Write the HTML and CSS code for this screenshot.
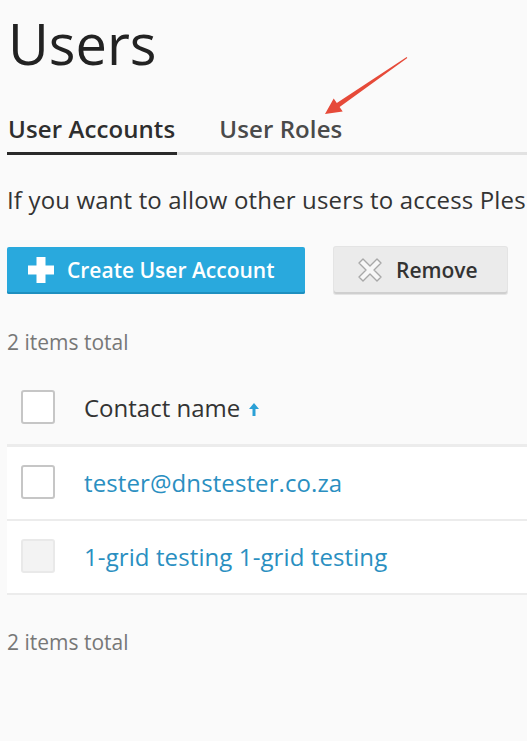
FILE: index.html
```html
<!DOCTYPE html>
<html lang="en">
<head>
<meta charset="utf-8">
<title>Users</title>
<link rel="stylesheet" href="styles.css">
</head>
<body>
<div class="page">
  <h1 class="title">Users</h1>

  <div class="tabs">
    <a class="tab tab-active">User Accounts</a>
    <a class="tab">User Roles</a>
  </div>

  <p class="hint">If you want to allow other users to access Plesk, create user accounts for them.</p>

  <div class="toolbar">
    <button class="btn btn-primary">
      <svg class="btn-icon" width="26" height="26" viewBox="0 0 26 26"><path d="M8.5 0h9v8.5H26v9h-8.5V26h-9v-8.5H0v-9h8.5z" fill="#fff"/></svg>
      <span>Create User Account</span>
    </button>
    <button class="btn btn-secondary">
      <svg class="btn-icon" width="26" height="26" viewBox="0 0 26 26"><polygon points="2,6 6,2 13,9 20,2 24,6 17,13 24,20 20,24 13,17 6,24 2,20 9,13" fill="#f7f7f7" stroke="#a8a8a8" stroke-width="1.4" stroke-linejoin="round"/></svg>
      <span>Remove</span>
    </button>
  </div>

  <div class="total">2 items total</div>

  <div class="table">
    <div class="row row-head">
      <span class="check"></span>
      <span class="head-label">Contact name
        <svg class="sort" width="12" height="15" viewBox="0 0 12 15"><path d="M6 1L1 7H4.5V14H7.5V7H11z" fill="#2aa0d6"/></svg>
      </span>
    </div>
    <div class="row row-body">
      <span class="check"></span>
      <a class="link">tester@dnstester.co.za</a>
    </div>
    <div class="row row-body">
      <span class="check check-disabled"></span>
      <a class="link">1-grid testing 1-grid testing</a>
    </div>
  </div>

  <div class="total total-bottom">2 items total</div>
</div>

<svg class="annotation" width="527" height="741" viewBox="0 0 527 741">
  <polygon points="325,114 333.7,98.4 336.8,102.9 406.7,57.1 407.3,58 339.6,107.1 342.7,111.6" fill="#e64a39"/>
</svg>
</body>
</html>
```

FILE: styles.css
```css
html, body {
  margin: 0;
  padding: 0;
  background: #fafafa;
  overflow: hidden;
}

body {
  font-family: "Open Sans", "Noto Sans", sans-serif;
  color: #333;
  width: 527px;
  height: 741px;
  position: relative;
}

.page {
  padding-left: 7px;
  width: 700px;
}

.title {
  margin: 15px 0 0 1px;
  font-size: 56px;
  line-height: 56px;
  font-weight: 400;
  color: #222;
}

.tabs {
  display: flex;
  margin-top: 46px;
  border-bottom: 3px solid #e2e2e2;
}

.tab {
  font-size: 24px;
  line-height: 24px;
  font-weight: 600;
  color: #4a4a4a;
  padding: 0 2px 11px 1px;
  margin-right: 41px;
  margin-bottom: -3px;
  border-bottom: 3px solid transparent;
  letter-spacing: 0.1px;
}

.tab-active {
  color: #2e2e2e;
  border-bottom-color: #2a2a2a;
}

.hint {
  margin: 33px 0 0 0;
  font-size: 24px;
  line-height: 24px;
  letter-spacing: 0.15px;
  white-space: nowrap;
  color: #333;
}

.toolbar {
  display: flex;
  gap: 28px;
  margin-top: 35px;
}

.btn {
  display: flex;
  align-items: center;
  height: 47px;
  box-sizing: border-box;
  border: 0;
  border-radius: 2px;
  font-family: "Open Sans", "Noto Sans", sans-serif;
  font-size: 21px;
  font-weight: 600;
  padding: 0 0 2px 0;
}

.btn-primary {
  width: 298px;
  background: #29a9dd;
  color: #fff;
  box-shadow: inset 0 -2px 0 #1e8fbf;
  padding-left: 21px;
}

.btn-primary .btn-icon {
  margin-right: 13px;
}

.btn-secondary {
  width: 173px;
  margin-left: 1px;
  background: #ebebeb;
  color: #333;
  box-shadow: inset 0 -2px 0 #cfcfcf, 0 0 0 1px #e4e4e4;
  padding-left: 23px;
}

.btn-secondary .btn-icon {
  margin-right: 13px;
}

.total {
  margin-top: 38px;
  font-size: 21px;
  line-height: 21px;
  color: #777;
}

.table {
  margin-top: 17px;
  width: 700px;
}

.row {
  display: flex;
  align-items: center;
  padding-left: 14px;
  box-sizing: border-box;
}

.row-head {
  height: 77px;
  border-bottom: 3px solid #ececec;
}

.row-body {
  height: 74px;
  background: #fff;
  border-bottom: 2px solid #ececec;
  padding-bottom: 2px;
}

.check {
  width: 34px;
  height: 34px;
  box-sizing: border-box;
  border: 2px solid #c6c6c6;
  border-radius: 3px;
  background: #fff;
  margin-right: 29px;
  flex: none;
}

.check-disabled {
  border-color: #e9e9e9;
  background: #f3f3f3;
}

.head-label {
  font-size: 24px;
  color: #333;
  display: flex;
  align-items: center;
}

.sort {
  margin-left: 8px;
  margin-top: 4px;
}

.link {
  font-size: 24px;
  letter-spacing: 0.1px;
  color: #2a8fc1;
}

.total-bottom {
  margin-top: 37px;
}

.annotation {
  position: absolute;
  left: 0;
  top: 0;
  pointer-events: none;
}
```
